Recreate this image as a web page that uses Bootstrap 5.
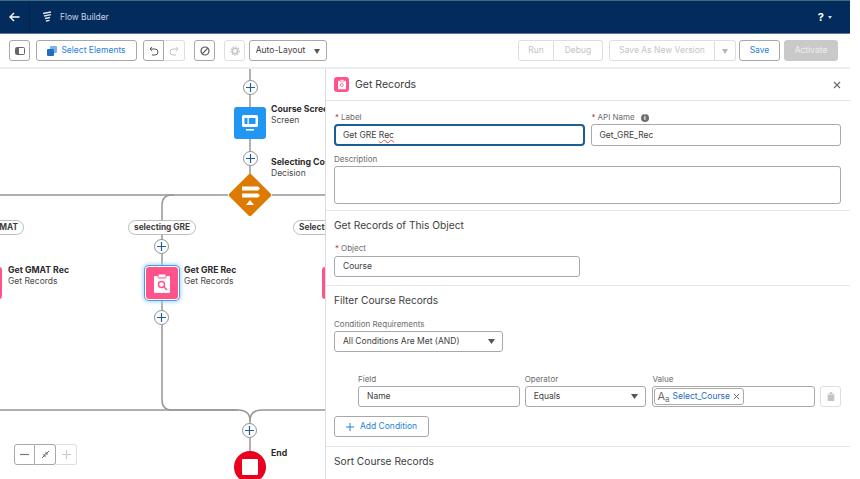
<!DOCTYPE html>
<html lang="en">
<head>
    <meta charset="UTF-8">
    <title>Flow Builder</title>
    <link href="https://cdn.jsdelivr.net/npm/bootstrap@5.3.3/dist/css/bootstrap.min.css" rel="stylesheet">
    <style>
        html, body { height: 100%; background: #fff; overflow: hidden; }
        body { font-family: Inter, "Liberation Sans", sans-serif; font-size: 8.5px; color: #3e3e3c; }
        .app-shell { width: 850px; height: 479px; overflow: hidden; }

        .top-bar { height: 34px; background: #032b5c; border-top: 1px solid #3d6c80; border-bottom: 1px solid #5b7896; color: #c9d6e4; padding: 0; }
        .back-cell { width: 30px; height: 32px; border-right: 1px solid #02254f; }
        .flow-mark { margin-left: 12px; }
        .app-name { font-size: 8.4px; margin-left: 8px; }
        .help-mark { font-size: 11px; font-weight: 700; color: #fff; margin-right: 4px; }
        .help-caret { width: 0; height: 0; border: 2px solid transparent; border-top: 3px solid #c9d6e4; margin: 2px 18px 0 0; }

        .tool-bar { height: 35px; padding: 6px 12px 0 9px; border-bottom: 2px solid #ededed; }
        .tb { height: 21px; padding: 0 8px; font-size: 8.5px; line-height: 1; white-space: nowrap; background: #fff; color: #3e3e3c; border: 1px solid #a8a8a8; border-radius: 3px; display: inline-flex; align-items: center; justify-content: center; }
        .tb.is-link { color: #1f7fd6; }
        .tb.is-off { color: #c4c4c4; border-color: #dedede; }
        .tb.is-solid { background: #c9c9c9; border-color: #c9c9c9; color: #efefef; }
        .tb-square { width: 21px; padding: 0; }
        .tb-join-l { border-top-right-radius: 0; border-bottom-right-radius: 0; }
        .tb-join-r { border-top-left-radius: 0; border-bottom-left-radius: 0; border-left: 0; }
        .tb-arrow { width: 0; height: 0; border: 3.5px solid transparent; border-top: 5px solid #555; margin: 4px 0 0 9px; }
        .tb-arrow.is-off { border-top-color: #b5b5b5; margin: 4px 0 0 0; }
        .gap-six { margin-left: 6px; }
        .gap-nine { margin-left: 9px; }
        .gap-four { margin-left: 4px; }
        .gap-three { margin-left: 3px; }
        .w-select { width: 101px; }
        .w-auto-layout { width: 78px; padding: 0; }
        .w-run { width: 36px; }
        .w-debug { width: 49px; }
        .w-save-as { width: 106px; }
        .w-save { width: 41px; }
        .w-activate { width: 54px; }
        .w-add { width: 95px; }

        .work-area { height: 411px; }
        .flow-canvas { width: 325px; height: 411px; flex: none; overflow: hidden; background: #fff; }
        .flow-lines { position: absolute; left: 0; top: 0; }
        .plus-btn { position: absolute; width: 15px; height: 15px; border: 1.5px solid #8f8f8f; border-radius: 50%; background: #fff; display: flex; align-items: center; justify-content: center; }
        .flow-node { position: absolute; display: flex; align-items: center; justify-content: center; border-radius: 3px; width: 32px; height: 32px; }
        .node-pink { background: #ff538a; }
        .node-text { position: absolute; font-size: 8.5px; line-height: 11px; white-space: nowrap; color: #4a4a4a; }
        .node-text b { display: block; color: #2b2b2b; font-weight: 700; font-size: 8.7px; }
        .branch-pill { position: absolute; height: 15px; line-height: 13px; border: 1px solid #bcbcbc; border-radius: 8px; background: #fff; font-size: 8.3px; font-weight: 700; color: #3e3e3c; padding: 0 5px; white-space: nowrap; text-align: center; }
        .node-picked { box-shadow: 0 0 0 1px #fff, 0 0 0 2px #4a9be8, 0 0 4px 3px #a9d2f7; }
        .zoom-tools { position: absolute; left: 14px; top: 375px; height: 21px; }
        .end-square { display: block; width: 16px; height: 16px; border-radius: 1px; background: #fff; }

        .side-panel { width: 525px; flex: none; height: 411px; border-left: 1px solid #dcdcdc; background: #fff; overflow: hidden; }
        .panel-head { height: 32px; padding: 0 9px 0 8px; border-bottom: 1.5px solid #e2e2e2; }
        .panel-title { font-size: 10.5px; margin-left: 6px; color: #3a3a3a; }
        .panel-icon { width: 15px; height: 15px; background: #ff538a; border-radius: 3px; display: flex; align-items: center; justify-content: center; }
        .panel-sec { padding: 0 9px 0 8px; border-bottom: 1.5px solid #e8e8e8; }
        .sec-one { padding-top: 10px; padding-bottom: 6px; }
        .sec-two { padding-top: 7px; padding-bottom: 8px; }
        .sec-three { padding-top: 7px; padding-bottom: 9px; }
        .sec-four { padding-top: 7px; border-bottom: 0; }
        .two-up { gap: 6px; }
        .sec-title { font-size: 10.2px; line-height: 14px; color: #3e3e3c; }
        .fld-label { display: block; font-size: 8px; line-height: 12px; margin: 0 0 1px; color: #6b6b6b; }
        .fld-label i { color: #c23934; font-style: normal; margin: 0 2px 0 1px; }
        .lbl-desc { margin-top: 7px; }
        .lbl-object { margin: 10px 0 2px; }
        .lbl-cond { margin-top: 11px; }
        .fld-box.form-control, .fld-box.form-select { height: 21px; min-height: 0; font-size: 8.5px; line-height: 1; color: #3e3e3c; padding: 0 8px; border: 1px solid #a9a9a9; border-radius: 3px; box-shadow: none; display: flex; align-items: center; }
        .fld-box.form-select { display: block; padding-right: 20px; background-image: url("data:image/svg+xml,%3Csvg xmlns='http://www.w3.org/2000/svg' width='8' height='5'%3E%3Cpolygon points='0,0 8,0 4,5' fill='%23555'/%3E%3C/svg%3E"); background-size: 7px 5px; background-position: right 7px center; }
        .fld-box.is-active { height: 22px; border: 2px solid #1b5e96; border-radius: 4px; padding: 0 7px; }
        .fld-box.is-api { height: 22px; }
        .w-object { width: 246px; }
        .w-cond { width: 169px; }
        .spell-bad { text-decoration: underline wavy #d9534f 1px; text-underline-offset: 1px; }
        .fld-note.form-control { height: 38px; min-height: 0; padding: 4px 8px; font-size: 8.5px; border: 1px solid #a9a9a9; border-radius: 3px; resize: none; }
        .info-dot { width: 8px; height: 8px; background: #706e6b; color: #fff; border-radius: 50%; font-size: 6px; font-weight: 700; line-height: 8px; text-align: center; margin-left: 6px; display: inline-block; }
        .cond-row { margin: 21px 0 9px 24px; }
        .col-field { width: 162px; }
        .col-op { width: 122px; margin-left: 5px; }
        .col-value { width: 163px; margin-left: 6px; }
        .value-pill { height: 17px; margin-left: -7px; padding: 0 3px 0 2px; border: 1px solid #a9a9a9; border-radius: 3px; color: #1b6cc0; display: flex; align-items: center; gap: 3px; }
        .aa-mark { color: #706e6b; font-size: 11px; line-height: 1; }
        .aa-mark small { font-size: 8px; position: relative; top: 2px; }
        .trash-box { margin: 13px 0 0 5px; }
        .add-plus { margin-right: 6px; }
    </style>
</head>
<body>
<div class="app-shell">

    <nav class="navbar top-bar d-flex align-items-center flex-nowrap">
        <div class="d-flex align-items-center">
            <div class="back-cell d-flex align-items-center justify-content-center">
                <svg width="11" height="10" viewBox="0 0 11 10"><path d="M5 1 1 5l4 4M1 5h9.5" fill="none" stroke="#fff" stroke-width="1.4"/></svg>
            </div>
            <svg class="flow-mark" width="10" height="12" viewBox="0 0 10 12"><path d="M1 2.5 9 1M2 5l7-1.3M3 7.5l5-1M4 10l3.5-.7" fill="none" stroke="#dce5ee" stroke-width="1.3"/></svg>
            <span class="app-name">Flow Builder</span>
        </div>
        <div class="d-flex align-items-center">
            <span class="help-mark">?</span>
            <span class="help-caret"></span>
        </div>
    </nav>

    <div class="tool-bar d-flex justify-content-between">
        <div class="d-flex">
            <button class="tb tb-square" type="button">
                <svg width="10" height="8" viewBox="0 0 10 8"><rect x=".5" y=".5" width="9" height="7" rx="1" fill="none" stroke="#666"/><rect x="1" y="1" width="3" height="6" fill="#666"/></svg>
            </button>
            <button class="tb is-link w-select gap-six" type="button">
                <svg class="me-1" width="10" height="10" viewBox="0 0 10 10"><rect x="3" y="0" width="7" height="7" rx="1" fill="#7db4e8"/><rect x="0" y="3" width="7" height="7" rx="1" fill="#1f6fc4"/></svg>
                Select Elements
            </button>
            <div class="d-flex gap-six">
                <button class="tb tb-square tb-join-l" type="button">
                    <svg width="10" height="10" viewBox="0 0 10 10"><path d="M3 .8 1 3l2.2 2M1 3h5a3 3 0 0 1 0 6H3" fill="none" stroke="#555" stroke-width="1"/></svg>
                </button>
                <button class="tb tb-square tb-join-r is-off" type="button">
                    <svg width="10" height="10" viewBox="0 0 10 10"><path d="M7 .8 9 3 6.8 5M9 3H4a3 3 0 0 0 0 6h3" fill="none" stroke="#c4c4c4" stroke-width="1"/></svg>
                </button>
            </div>
            <button class="tb tb-square gap-nine" type="button">
                <svg width="10" height="10" viewBox="0 0 10 10"><circle cx="5" cy="5" r="4" fill="none" stroke="#555" stroke-width="1.2"/><path d="M2.2 7.8 7.8 2.2" stroke="#555" stroke-width="1.2"/></svg>
            </button>
            <button class="tb tb-square is-off gap-nine" type="button">
                <svg width="10" height="10" viewBox="0 0 10 10"><circle cx="5" cy="5" r="2.7" fill="none" stroke="#c4c4c4" stroke-width="1.6"/><circle cx="5" cy="5" r="4.2" fill="none" stroke="#c4c4c4" stroke-width="1.2" stroke-dasharray="1.4 1.4"/></svg>
            </button>
            <button class="tb w-auto-layout gap-four" type="button">Auto-Layout<span class="tb-arrow"></span></button>
        </div>
        <div class="d-flex">
            <button class="tb is-off tb-join-l w-run" type="button">Run</button>
            <button class="tb is-off tb-join-r w-debug" type="button">Debug</button>
            <button class="tb is-off tb-join-l w-save-as gap-six" type="button">Save As New Version</button>
            <button class="tb tb-square is-off tb-join-r" type="button"><span class="tb-arrow is-off"></span></button>
            <button class="tb is-link w-save gap-three" type="button">Save</button>
            <button class="tb is-solid w-activate gap-four" type="button">Activate</button>
        </div>
    </div>

    <div class="work-area d-flex">
        <div class="flow-canvas position-relative">
            <svg class="flow-lines" width="325" height="411" viewBox="0 69 325 411">
                <g fill="none" stroke="#979797" stroke-width="1.5">
                    <path d="M250 69V175"/>
                    <path d="M0 195H228M272 195H325"/>
                    <path d="M174 195H172Q162 195 162 205V400Q162 410 172 410H238Q250 410 250 421"/>
                    <path d="M0 410H238M325 410H262Q250 410 250 421V452"/>
                </g>
            </svg>

            <span class="plus-btn" style="left:243px;top:11px"><svg width="9" height="9" viewBox="0 0 9 9"><path d="M4.5 0v9M0 4.5h9" stroke="#1f5f9e" stroke-width="1.2"/></svg></span>
            <div class="flow-node" style="left:234px;top:38px;background:#2196f3">
                <svg width="20" height="20" viewBox="0 0 20 20"><rect x="2" y="2" width="16" height="12" rx="1.5" fill="#fff"/><rect x="4.5" y="5" width="3" height="6" fill="#2196f3"/><rect x="8.8" y="5" width="6.7" height="6" fill="#2196f3"/><rect x="6" y="16" width="8" height="1.6" fill="#fff"/></svg>
            </div>
            <div class="node-text" style="left:271px;top:35px"><b>Course Scree</b>Screen</div>

            <span class="plus-btn" style="left:243px;top:82px"><svg width="9" height="9" viewBox="0 0 9 9"><path d="M4.5 0v9M0 4.5h9" stroke="#1f5f9e" stroke-width="1.2"/></svg></span>
            <div class="node-text" style="left:271px;top:88px"><b>Selecting Co</b>Decision</div>
            <svg class="flow-lines" style="left:228px;top:104px" width="44" height="44" viewBox="0 0 44 44">
                <rect x="6.5" y="6.5" width="31" height="31" rx="2" transform="rotate(45 22 22)" fill="#dd7a01"/>
                <path d="M14 13.5h16l2 2-2 2H14zM14 20.5h16l2 2-2 2H14z" fill="#fff"/><path d="M22 27l4 5h-8z" fill="#fff"/>
            </svg>

            <span class="branch-pill" style="left:-10px;top:151px;width:34px;text-align:right">MAT</span>
            <span class="branch-pill" style="left:128px;top:151px;width:68px">selecting GRE</span>
            <span class="branch-pill" style="left:293px;top:151px;width:50px;text-align:left">Selecti</span>

            <span class="plus-btn" style="left:154px;top:170px"><svg width="9" height="9" viewBox="0 0 9 9"><path d="M4.5 0v9M0 4.5h9" stroke="#1f5f9e" stroke-width="1.2"/></svg></span>

            <div class="flow-node node-pink" style="left:-30px;top:198px"></div>
            <div class="node-text" style="left:8px;top:196px"><b>Get GMAT Rec</b>Get Records</div>

            <div class="flow-node node-pink node-picked" style="left:146px;top:198px">
                <svg width="20" height="21" viewBox="0 0 20 21"><path d="M3 3h14a1 1 0 0 1 1 1v15a1 1 0 0 1-1 1H3a1 1 0 0 1-1-1V4a1 1 0 0 1 1-1z" fill="#fff"/><rect x="6" y="1" width="8" height="4" rx="1" fill="#fff" stroke="#ff538a"/><circle cx="9.5" cy="11.5" r="3" fill="none" stroke="#ff538a" stroke-width="1.5"/><path d="M11.8 13.8 15 17" stroke="#ff538a" stroke-width="1.6"/></svg>
            </div>
            <div class="node-text" style="left:184px;top:196px"><b>Get GRE Rec</b>Get Records</div>

            <div class="flow-node node-pink" style="left:322px;top:198px"></div>

            <span class="plus-btn" style="left:154px;top:241px"><svg width="9" height="9" viewBox="0 0 9 9"><path d="M4.5 0v9M0 4.5h9" stroke="#1f5f9e" stroke-width="1.2"/></svg></span>
            <span class="plus-btn" style="left:242px;top:354px"><svg width="9" height="9" viewBox="0 0 9 9"><path d="M4.5 0v9M0 4.5h9" stroke="#1f5f9e" stroke-width="1.2"/></svg></span>

            <div class="flow-node rounded-circle" style="left:234px;top:382px;background:#ea001e">
                <span class="end-square"></span>
            </div>
            <div class="node-text" style="left:271px;top:379px"><b>End</b></div>

            <div class="zoom-tools d-flex">
                <button class="tb tb-square tb-join-l" type="button"><svg width="9" height="9" viewBox="0 0 9 9"><path d="M0 4.5h9" stroke="#777" stroke-width="1.2"/></svg></button>
                <button class="tb tb-square tb-join-r" type="button"><svg width="9" height="9" viewBox="0 0 9 9"><path d="M1 8l2.6-2.6M8 1 5.4 3.6" stroke="#666"/><path d="M1.6 4.5h2.9v2.9zM7.4 4.5H4.5V1.6z" fill="#666"/></svg></button>
                <button class="tb tb-square tb-join-r is-off" type="button"><svg width="9" height="9" viewBox="0 0 9 9"><path d="M0 4.5h9M4.5 0v9" stroke="#ccc" stroke-width="1.2"/></svg></button>
            </div>
        </div>

        <aside class="side-panel">
            <div class="panel-head d-flex align-items-center justify-content-between">
                <div class="d-flex align-items-center">
                    <span class="panel-icon"><svg width="10" height="11" viewBox="0 0 20 21"><path d="M3 3h14a1 1 0 0 1 1 1v15a1 1 0 0 1-1 1H3a1 1 0 0 1-1-1V4a1 1 0 0 1 1-1z" fill="#fff"/><rect x="6" y="1" width="8" height="4" rx="1" fill="#fff" stroke="#ff538a"/><circle cx="9.5" cy="11.5" r="3" fill="none" stroke="#ff538a" stroke-width="1.6"/></svg></span>
                    <span class="panel-title">Get Records</span>
                </div>
                <svg width="8" height="8" viewBox="0 0 8 8"><path d="M1 1l6 6M7 1 1 7" stroke="#666" stroke-width="1.1"/></svg>
            </div>

            <section class="panel-sec sec-one">
                <div class="d-flex two-up">
                    <div class="flex-fill w-50">
                        <label class="fld-label"><i>*</i>Label</label>
                        <div class="form-control fld-box is-active"><span>Get GRE <span class="spell-bad">Rec</span></span></div>
                    </div>
                    <div class="flex-fill w-50">
                        <label class="fld-label"><i>*</i>API Name<span class="info-dot">i</span></label>
                        <div class="form-control fld-box is-api">Get_GRE_Rec</div>
                    </div>
                </div>
                <label class="fld-label lbl-desc">Description</label>
                <textarea class="form-control fld-note"></textarea>
            </section>

            <section class="panel-sec sec-two">
                <div class="sec-title">Get Records of This Object</div>
                <label class="fld-label lbl-object"><i>*</i>Object</label>
                <div class="form-control fld-box w-object">Course</div>
            </section>

            <section class="panel-sec sec-three">
                <div class="sec-title">Filter Course Records</div>
                <label class="fld-label lbl-cond">Condition Requirements</label>
                <select class="form-select fld-box w-cond"><option>All Conditions Are Met (AND)</option></select>
                <div class="d-flex cond-row">
                    <div class="col-field">
                        <label class="fld-label">Field</label>
                        <div class="form-control fld-box">Name</div>
                    </div>
                    <div class="col-op">
                        <label class="fld-label">Operator</label>
                        <select class="form-select fld-box"><option>Equals</option></select>
                    </div>
                    <div class="col-value">
                        <label class="fld-label">Value</label>
                        <div class="form-control fld-box">
                            <span class="value-pill"><span class="aa-mark">A<small>a</small></span>Select_Course
                                <svg width="7" height="7" viewBox="0 0 8 8"><path d="M1 1l6 6M7 1 1 7" stroke="#666" stroke-width="1.1"/></svg>
                            </span>
                        </div>
                    </div>
                    <button class="tb tb-square is-off trash-box" type="button">
                        <svg width="8" height="9" viewBox="0 0 8 9"><path d="M0 2h8M3 2V.5h2V2M1 3h6v6H1z" fill="#c4c4c4" stroke="#c4c4c4" stroke-width=".6"/></svg>
                    </button>
                </div>
                <button class="tb is-link w-add" type="button">
                    <svg class="add-plus" width="8" height="8" viewBox="0 0 9 9"><path d="M4.5 0v9M0 4.5h9" stroke="#1f7fd6" stroke-width="1.1"/></svg>
                    Add Condition
                </button>
            </section>

            <section class="panel-sec sec-four">
                <div class="sec-title">Sort Course Records</div>
            </section>
        </aside>
    </div>
</div>
<script src="https://cdn.jsdelivr.net/npm/bootstrap@5.3.3/dist/js/bootstrap.bundle.min.js"></script>
</body>
</html>
